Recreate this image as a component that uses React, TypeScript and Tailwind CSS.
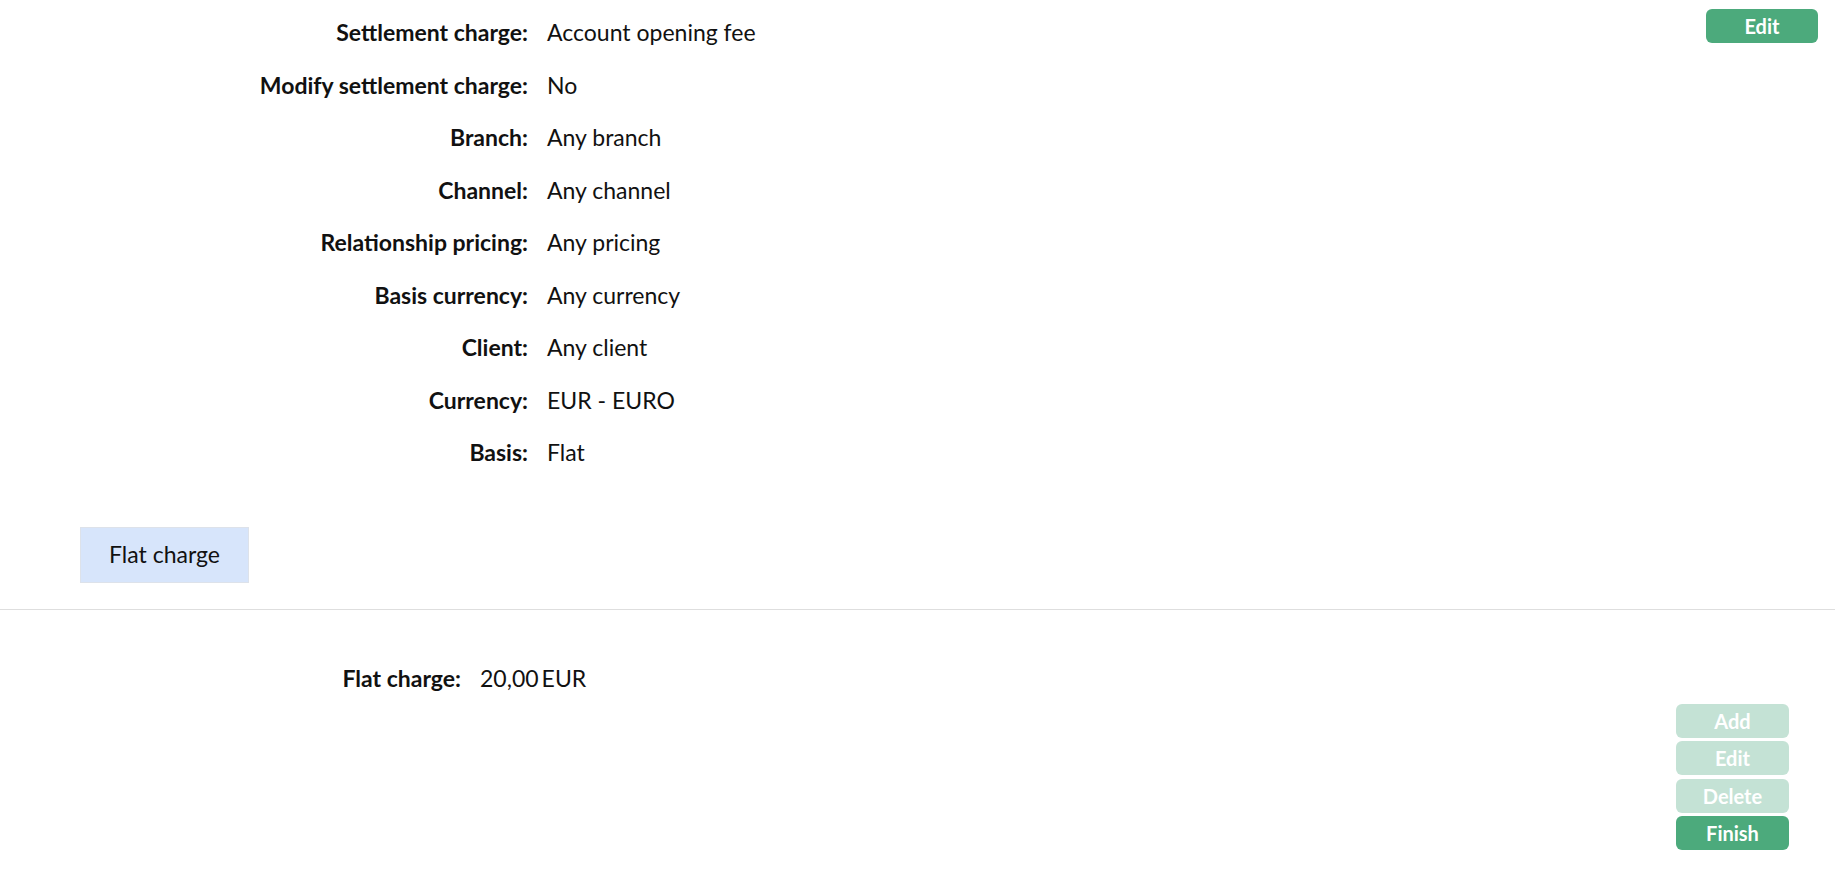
const rows = [
  ["Settlement charge:", "Account opening fee"],
  ["Modify settlement charge:", "No"],
  ["Branch:", "Any branch"],
  ["Channel:", "Any channel"],
  ["Relationship pricing:", "Any pricing"],
  ["Basis currency:", "Any currency"],
  ["Client:", "Any client"],
  ["Currency:", "EUR - EURO"],
  ["Basis:", "Flat"],
]

const actions = [
  { label: "Add", active: false },
  { label: "Edit", active: false },
  { label: "Delete", active: false },
  { label: "Finish", active: true },
]

export default function App() {
  return (
    <div className="min-h-screen bg-white text-[#111] font-['Lato',_'Liberation_Sans',_sans-serif]">
      <section className="flex justify-between pr-[17px]">
        <div className="pt-[6px]">
          {rows.map(([label, value]) => (
            <div key={label} className="flex h-[52.5px] items-center text-[23px]">
              <span className="w-[528px] text-right font-bold">{label}</span>
              <span className="ml-[19px]">{value}</span>
            </div>
          ))}
        </div>
        <button className="mt-[9px] h-[34px] w-[112px] rounded-[6px] bg-[#4caa7c] text-[20px] font-bold text-white">
          Edit
        </button>
      </section>

      <div className="mt-[48px] pl-[80px]">
        <div className="flex h-[56px] w-[169px] items-center justify-center border border-[#dde2ea] bg-[#d7e5fb] text-[23px]">
          Flat charge
        </div>
      </div>

      <div className="mt-[26px] h-px bg-[#dedede]" />

      <section className="flex items-start justify-between pr-[46px]">
        <div className="mt-[51px] flex text-[23px]">
          <span className="w-[461px] text-right font-bold">Flat charge:</span>
          <span className="ml-[19px]">20,00</span>
          <span className="ml-[3px]">EUR</span>
        </div>
        <div className="mt-[94px] flex flex-col gap-[3.5px]">
          {actions.map((a) => (
            <button
              key={a.label}
              className={
                a.active
                  ? "h-[34px] w-[113px] rounded-[6px] bg-[#4caa7c] text-[20px] font-bold text-white"
                  : "h-[34px] w-[113px] rounded-[6px] bg-[#c4e2d5] text-[20px] font-bold text-white"
              }
            >
              {a.label}
            </button>
          ))}
        </div>
      </section>
    </div>
  )
}
